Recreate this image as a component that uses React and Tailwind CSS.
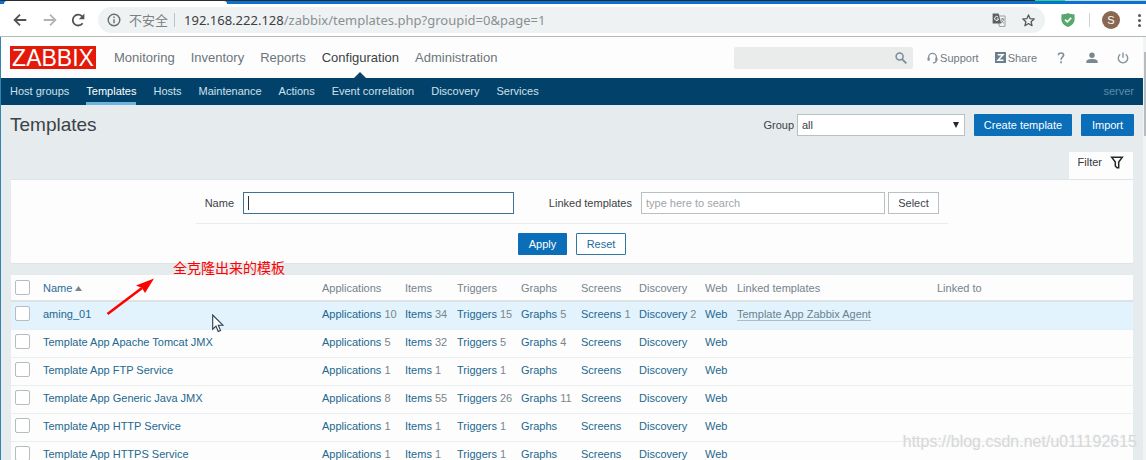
import React from "react";

const MENU = ["Monitoring", "Inventory", "Reports", "Configuration", "Administration"];
const SUBMENU = ["Host groups", "Templates", "Hosts", "Maintenance", "Actions", "Event correlation", "Discovery", "Services"];
const LINK_COLUMNS = ["Applications", "Items", "Triggers", "Graphs", "Screens", "Discovery", "Web"];

const TEMPLATES = [
  { name: "aming_01", counts: [10, 34, 15, 5, 1, 2], linked: "Template App Zabbix Agent", hovered: true },
  { name: "Template App Apache Tomcat JMX", counts: [5, 32, 5, 4] },
  { name: "Template App FTP Service", counts: [1, 1, 1] },
  { name: "Template App Generic Java JMX", counts: [8, 55, 26, 11] },
  { name: "Template App HTTP Service", counts: [1, 1, 1] },
  { name: "Template App HTTPS Service", counts: [1, 1, 1] },
];

function TabStrip() {
  return (
    <div className="shrink-0 bg-[#0b72d2]">
      <div className="flex h-px bg-[#2b2b30]">
        <span className="ml-auto w-[30px] bg-[#2fd67c]" />
        <span className="w-[81px] bg-[#c3d8d2]" />
      </div>
      <div className="flex h-[3px] items-end">
        <span className="ml-1 h-[3px] w-[223px] rounded-t-sm bg-white" />
      </div>
    </div>
  );
}

function BrowserBar() {
  return (
    <div className="flex h-[33px] shrink-0 items-center border-b border-[#b4b8ba] bg-white pr-1 pl-3">
      <button aria-label="Back" className="flex w-4 justify-center">
        <svg width="14" height="14" viewBox="0 0 14 14" fill="none" stroke="#4f5356" strokeWidth="1.8">
          <path d="M13.3 7H1.8M7 1.6 1.6 7 7 12.4" />
        </svg>
      </button>
      <button aria-label="Forward" className="ml-3.5 flex w-4 justify-center">
        <svg width="14" height="14" viewBox="0 0 14 14" fill="none" stroke="#b1b4b6" strokeWidth="1.8">
          <path d="M.7 7h11.5M7 1.6 12.4 7 7 12.4" />
        </svg>
      </button>
      <button aria-label="Reload" className="ml-3 flex w-4 justify-center">
        <svg width="14" height="14" viewBox="0 0 14 14">
          <path d="M11.6 10.2A5.4 5.4 0 1 1 11 3.3" fill="none" stroke="#4f5356" strokeWidth="1.8" />
          <path d="M13.4.6v5.6H7.8z" fill="#4f5356" />
        </svg>
      </button>
      <div className="ml-3 flex h-[26px] flex-1 items-center rounded-full bg-[#eff2f3] pr-2.5 pl-[9px] font-['Noto_Sans','Noto_Sans_CJK_SC',sans-serif] text-[13px] leading-5">
        <svg width="14" height="14" viewBox="0 0 14 14" fill="none" stroke="#6a6e70" strokeWidth="1.4">
          <circle cx="7" cy="7" r="5.8" />
          <path d="M7 6.2v4M7 3.6v1.5" />
        </svg>
        <span className="ml-2 text-[#7d8183]">不安全</span>
        <span className="ml-1.5 h-3.5 w-px bg-[#bfc3c5]" />
        <span className="ml-[9px] whitespace-nowrap text-[#8a8f92]">
          <span className="text-[#3c4043]">192.168.222.128</span>/zabbix/templates.php?groupid=0&amp;page=1
        </span>
        <button aria-label="Translate this page" className="ml-auto">
          <svg width="14" height="14" viewBox="0 0 14 14">
            <path d="M5.5 3H13v10.4H7.4z" fill="#f4f6f6" stroke="#9a9ea0" />
            <path d="M.6.6h6l2.6 10H.6z" fill="#5c6063" />
            <path d="M6.2 4.2A2 2 0 1 0 6.6 6H4.8" fill="none" stroke="#fff" />
            <path d="M8.6 6h3.6M10.4 5v1M11.6 6c-.3 1.8-1.2 3-2.6 4M9.4 7.2c.6 1.5 1.4 2.3 2.6 3" fill="none" stroke="#7d8183" strokeWidth=".9" />
          </svg>
        </button>
        <button aria-label="Bookmark this page" className="ml-4">
          <svg width="13" height="13" viewBox="0 0 14 14" fill="none" stroke="#54585b" strokeWidth="1.4" strokeLinejoin="round">
            <path d="m7 1 1.8 4 4.3.4-3.3 2.9 1 4.3L7 10.3l-3.8 2.3 1-4.3L.9 5.4l4.3-.4z" />
          </svg>
        </button>
      </div>
      <svg className="ml-4" width="14" height="14" viewBox="0 0 14 14">
        <path d="M7 0c2 1 4.400 1.400 6.600 1.400V6c0 4-2.800 6.600-6.600 8C3.200 12.600.4 10 .4 6V1.400C2.600 1.400 5 1 7 0z" fill="#58a86c" />
        <path d="m4 6.600 2.300 2.300 3.900-4" fill="none" stroke="#fff" strokeWidth="1.600" />
      </svg>
      <span className="ml-3.5 h-3.5 w-px bg-[#cfd2d4]" />
      <button aria-label="Profile" className="ml-3 flex size-[18px] items-center justify-center rounded-full bg-[#8a6750] text-[11px] leading-4 text-white">S</button>
      <button aria-label="Browser menu" className="ml-4 flex w-1.5 flex-col items-center gap-[2px]">
        <span className="size-[3px] rounded-full bg-[#54585b]" />
        <span className="size-[3px] rounded-full bg-[#54585b]" />
        <span className="size-[3px] rounded-full bg-[#54585b]" />
      </button>
    </div>
  );
}

function Header() {
  return (
    <header>
      <div className="flex h-[41px] items-center bg-[#fdfdfd] pr-3.5 pl-[9px]">
        <a href="#" className="flex h-[23px] w-[86px] items-center justify-center bg-[#e31a0a] text-[23px] leading-6 text-white">ZABBIX</a>
        <nav className="ml-[18px] flex gap-4 text-[13px] leading-5">
          {MENU.map((item) => (
            <a key={item} href="#" className={item === "Configuration" ? "relative text-[#3c4347]" : "text-[#6c757b]"}>
              {item}
              {item === "Configuration" && (
                <svg className="absolute top-[24px] left-1/2 -translate-x-1/2" width="14" height="7" viewBox="0 0 14 7">
                  <path d="M7 0l7 7H0z" fill="#0b4266" />
                </svg>
              )}
            </a>
          ))}
        </nav>
        <div className="ml-auto flex h-[22px] w-[179px] items-center rounded-xs bg-[#eaebeb] pr-1.5">
          <input type="text" aria-label="Search" className="h-full min-w-0 flex-1 bg-transparent px-1 outline-none" />
          <button aria-label="Search" className="flex">
            <svg width="12" height="12" viewBox="0 0 12 12" fill="none" stroke="#768d99">
              <circle cx="4.600" cy="4.600" r="3.500" strokeWidth="1.500" />
              <path d="m7.300 7.300 4 4" strokeWidth="1.800" />
            </svg>
          </button>
        </div>
        <a href="#" className="ml-3.5 flex items-center gap-0.5 text-[#6f7a80]">
          <svg width="11" height="12" viewBox="0 0 11 12" fill="none" stroke="#84929a" strokeWidth="1.300">
            <path d="M1.600 8V5.300a3.900 3.900 0 0 1 7.800 0V8c0 1.800-1 2.900-3.400 2.900" />
            <path d="M1.600 5.800v3M9.400 5.800v3" strokeWidth="2.200" />
          </svg>
          Support
        </a>
        <a href="#" className="ml-4 flex items-center gap-0.5 text-[#6f7a80]">
          <svg width="11" height="11" viewBox="0 0 11 11">
            <path d="M0 0h11v11H0z" fill="#68808f" />
            <path d="M2.800 2.700h5.200L3 8.300h5.400" fill="none" stroke="#fff" strokeWidth="1.500" />
          </svg>
          Share
        </a>
        <a href="#" aria-label="Help" className="ml-[18px] flex w-3 justify-center">
          <svg width="8" height="12" viewBox="0 0 8 12" fill="none" stroke="#7d8e97" strokeWidth="1.700">
            <path d="M1.400 3.200C1.500 1.800 2.500 1 4 1s2.600.8 2.600 2.100C6.600 5 4.100 5.100 4.100 7.700M4.100 9.300v1.900" />
          </svg>
        </a>
        <a href="#" aria-label="User profile" className="ml-[19px] flex w-3 justify-center">
          <svg width="12" height="12" viewBox="0 0 12 12" fill="#7a878e">
            <circle cx="6" cy="3.200" r="2.700" />
            <path d="M.4 11V9.300C.4 7.600 3.300 6.900 6 6.900s5.600.7 5.600 2.400V11z" />
          </svg>
        </a>
        <a href="#" aria-label="Sign out" className="ml-[19px] flex w-3 justify-center">
          <svg width="12" height="12" viewBox="0 0 12 12" fill="none" stroke="#84929a" strokeWidth="1.400">
            <path d="M3.300 2.300a4.700 4.700 0 1 0 5.400 0M6 .4v5.400" />
          </svg>
        </a>
      </div>
      <div className="flex h-[27px] items-stretch bg-[#02426a] pr-[9px] pl-[9px] text-[#cfe0ea]">
        <nav className="flex gap-[17px]">
          {SUBMENU.map((item) => (
            <a
              key={item}
              href="#"
              className={
                item === "Templates"
                  ? "flex items-center border-b-[3px] border-[#6bb4e2] pt-px text-white"
                  : "flex items-center pb-0.5"
              }
            >
              {item}
            </a>
          ))}
        </nav>
        <span className="ml-auto self-center pb-0.5 text-[#5f8aa5]">server</span>
      </div>
    </header>
  );
}

function Filter() {
  return (
    <section>
      <div className="flex justify-end">
        <button className="flex h-[27px] items-center gap-2 bg-[#fdfdfd] px-[9px] pb-[7px] text-[#33393d]">
          Filter
          <svg width="14" height="13" viewBox="0 0 13 13" fill="none" stroke="#22282c" strokeWidth="1.500">
            <path d="M1.200 1.200h10.600L8.200 6v5.800H6.500L4.800 10V6z" />
          </svg>
        </button>
      </div>
      <form className="border-y border-[#dfe4e7] bg-[#fdfdfd] pt-3 pb-2" onSubmit={(e) => e.preventDefault()}>
        <div className="mx-auto w-[752px] max-w-full">
          <div className="flex items-center border-b border-[#e9eced] pb-[9px] pl-1">
            <label htmlFor="filter-name" className="w-[34px] text-right">Name</label>
            <span className="relative ml-[9px] flex">
              <input id="filter-name" type="text" className="h-[22px] w-[271px] border border-[#3d7395] bg-white px-1 outline-none" />
              <span className="absolute top-1 left-[5px] h-3.5 w-px bg-[#333]" />
            </span>
            <label htmlFor="filter-linked" className="w-[118px] text-right">Linked templates</label>
            <input
              id="filter-linked"
              type="text"
              placeholder="type here to search"
              className="ml-[9px] h-[22px] w-[244px] border border-[#b9bfc2] bg-white px-1 outline-none placeholder:text-[#a0a5a8]"
            />
            <button type="button" className="ml-[3px] h-[22px] w-[51px] border border-[#b9bfc2] bg-white">Select</button>
          </div>
          <div className="flex justify-center gap-[9px] pt-[9px]">
            <button className="h-[22px] w-[49px] rounded-[1px] bg-[#0a6eb8] text-white">Apply</button>
            <button type="reset" className="h-[22px] w-[50px] rounded-[1px] border border-[#2f77a5] bg-white text-[#1f6b9c]">Reset</button>
          </div>
        </div>
      </form>
    </section>
  );
}

function Tick({ label }) {
  return (
    <input
      type="checkbox"
      aria-label={label}
      className="ml-1 block size-[15px] appearance-none rounded-xs border border-[#b5bdc1] bg-white"
    />
  );
}

function TemplateTable() {
  return (
    <table className="mt-[11px] w-full table-fixed border-collapse bg-[#fdfdfd] text-left whitespace-nowrap">
      <colgroup>
        <col className="w-8" />
        <col />
        <col className="w-[83px]" />
        <col className="w-[52px]" />
        <col className="w-16" />
        <col className="w-[60px]" />
        <col className="w-[58px]" />
        <col className="w-[66px]" />
        <col className="w-8" />
        <col className="w-[200px]" />
        <col className="w-[196px]" />
      </colgroup>
      <thead>
        <tr className="h-[26px] border-b-2 border-[#dde2e4] text-[#75838b]">
          <th><Tick label="Select all templates" /></th>
          <th className="font-normal">
            <a href="#" className="flex items-center gap-[3px] text-[#2a6d97]">
              Name
              <svg className="mt-0.5" width="7" height="5" viewBox="0 0 7 5"><path d="M3.500 0 7 5H0z" fill="#7d8589" /></svg>
            </a>
          </th>
          {LINK_COLUMNS.map((c) => (
            <th key={c} className="font-normal">{c}</th>
          ))}
          <th className="font-normal">Linked templates</th>
          <th className="font-normal">Linked to</th>
        </tr>
      </thead>
      <tbody>
        {TEMPLATES.map((t) => (
          <tr key={t.name} className={t.hovered ? "h-7 border-b border-[#e9eef0] bg-[#e3f3fd]" : "h-7 border-b border-[#eaeeef]"}>
            <td className="pb-1"><Tick label={"Select " + t.name} /></td>
            <td className="pb-0.5"><a href="#" className="text-[#22688f]">{t.name}</a></td>
            {LINK_COLUMNS.map((c, i) => (
              <td key={c} className="pb-0.5 text-[#7c8589]">
                <a href="#" className="text-[#22688f]">{c}</a>
                {t.counts[i] ? " " + t.counts[i] : ""}
              </td>
            ))}
            <td className="pb-0.5">
              {t.linked && <a href="#" className="border-b border-[#b0bcc2] text-[#688390]">{t.linked}</a>}
            </td>
            <td />
          </tr>
        ))}
      </tbody>
    </table>
  );
}

export default function App() {
  return (
    <div className="relative flex h-screen flex-col overflow-hidden bg-white font-['Liberation_Sans',Arial,sans-serif] text-[11px] leading-4 text-[#3b4246]">
      <TabStrip />
      <BrowserBar />
      <div className="flex min-h-0 flex-1">
        <div className="min-w-0 flex-1 overflow-hidden border-l border-[#3385ad] bg-[#e6ebee]">
          <Header />
          <main>
            <div className="flex items-center pt-[9px] pr-[9px] pb-4 pl-[9px]">
              <h1 className="text-[19px] leading-[22px]">Templates</h1>
              <label htmlFor="group" className="ml-auto">Group</label>
              <span className="relative ml-[3px] flex">
                <select id="group" className="h-[22px] w-[168px] appearance-none border border-[#b9c0c4] bg-white px-1 outline-none">
                  <option>all</option>
                </select>
                <svg className="pointer-events-none absolute top-2 right-1.5" width="6" height="6" viewBox="0 0 6 6">
                  <path d="M0 0h6L3 6z" fill="#22282c" />
                </svg>
              </span>
              <button className="ml-[9px] h-[22px] w-[98px] rounded-[1px] bg-[#0a6eb8] text-white">Create template</button>
              <button className="ml-[9px] h-[22px] w-[53px] rounded-[1px] bg-[#0a6eb8] text-white">Import</button>
            </div>
            <div className="px-2.5">
              <Filter />
              <TemplateTable />
            </div>
          </main>
        </div>
        <div className="w-[3px] shrink-0 bg-[#f2f3f3] pt-[15px] pl-px">
          <div className="h-[84px] bg-[#b9bcbe]" />
        </div>
      </div>

      <svg className="pointer-events-none absolute top-[276px] left-[104px]" width="54" height="42" viewBox="0 0 54 42">
        <path d="M3.500 38 38 12" stroke="#fe0000" strokeWidth="2.600" />
        <path d="M50 2.500 41 17l-3-5-6-2.500z" fill="#fe0000" />
      </svg>
      <p className="pointer-events-none absolute top-[257px] left-[173px] font-['Noto_Sans_CJK_SC',sans-serif] text-[14px] leading-5 text-[#fe0000]">
        全克隆出来的模板
      </p>
      <svg className="pointer-events-none absolute top-[314px] left-[212px]" width="12" height="19" viewBox="0 0 12 19">
        <path d="M.7 1v14.200l3.300-3.100 2.200 5.300 2.300-1L6.300 11.200h4.600z" fill="#fff" stroke="#2b3a4a" strokeWidth="1.100" />
      </svg>
      <p className="pointer-events-none absolute right-[9px] bottom-2 text-[16px] leading-5 text-[#d6d8d9] [text-shadow:-1px_-1px_0_#f5f5f5]">
        https://blog.csdn.net/u011192615
      </p>
    </div>
  );
}
